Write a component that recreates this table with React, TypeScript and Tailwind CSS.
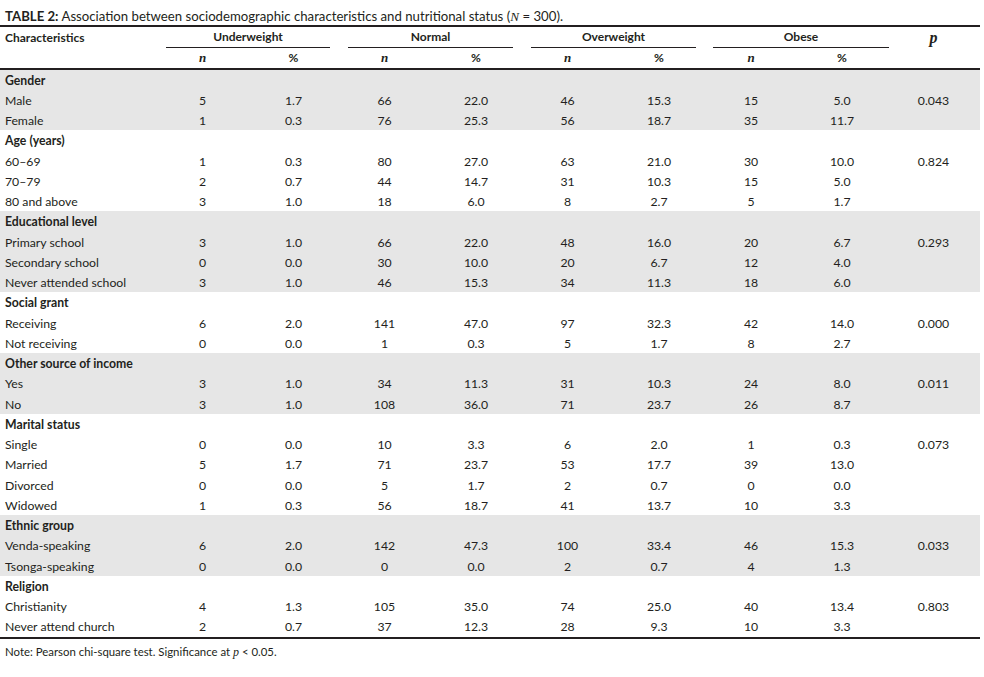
import React from 'react';

// Table 2 - sociodemographic characteristics vs nutritional status
type Row = { label: string; v: string[]; p?: string };
type Group = { title: string; rows: Row[] };

const groups: Group[] = [
  {
    title: 'Gender',
    rows: [
      { label: 'Male', v: ['5', '1.7', '66', '22.0', '46', '15.3', '15', '5.0'], p: '0.043' },
      { label: 'Female', v: ['1', '0.3', '76', '25.3', '56', '18.7', '35', '11.7'] },
    ],
  },
  {
    title: 'Age (years)',
    rows: [
      { label: '60–69', v: ['1', '0.3', '80', '27.0', '63', '21.0', '30', '10.0'], p: '0.824' },
      { label: '70–79', v: ['2', '0.7', '44', '14.7', '31', '10.3', '15', '5.0'] },
      { label: '80 and above', v: ['3', '1.0', '18', '6.0', '8', '2.7', '5', '1.7'] },
    ],
  },
  {
    title: 'Educational level',
    rows: [
      { label: 'Primary school', v: ['3', '1.0', '66', '22.0', '48', '16.0', '20', '6.7'], p: '0.293' },
      { label: 'Secondary school', v: ['0', '0.0', '30', '10.0', '20', '6.7', '12', '4.0'] },
      { label: 'Never attended school', v: ['3', '1.0', '46', '15.3', '34', '11.3', '18', '6.0'] },
    ],
  },
  {
    title: 'Social grant',
    rows: [
      { label: 'Receiving', v: ['6', '2.0', '141', '47.0', '97', '32.3', '42', '14.0'], p: '0.000' },
      { label: 'Not receiving', v: ['0', '0.0', '1', '0.3', '5', '1.7', '8', '2.7'] },
    ],
  },
  {
    title: 'Other source of income',
    rows: [
      { label: 'Yes', v: ['3', '1.0', '34', '11.3', '31', '10.3', '24', '8.0'], p: '0.011' },
      { label: 'No', v: ['3', '1.0', '108', '36.0', '71', '23.7', '26', '8.7'] },
    ],
  },
  {
    title: 'Marital status',
    rows: [
      { label: 'Single', v: ['0', '0.0', '10', '3.3', '6', '2.0', '1', '0.3'], p: '0.073' },
      { label: 'Married', v: ['5', '1.7', '71', '23.7', '53', '17.7', '39', '13.0'] },
      { label: 'Divorced', v: ['0', '0.0', '5', '1.7', '2', '0.7', '0', '0.0'] },
      { label: 'Widowed', v: ['1', '0.3', '56', '18.7', '41', '13.7', '10', '3.3'] },
    ],
  },
  {
    title: 'Ethnic group',
    rows: [
      { label: 'Venda-speaking', v: ['6', '2.0', '142', '47.3', '100', '33.4', '46', '15.3'], p: '0.033' },
      { label: 'Tsonga-speaking', v: ['0', '0.0', '0', '0.0', '2', '0.7', '4', '1.3'] },
    ],
  },
  {
    title: 'Religion',
    rows: [
      { label: 'Christianity', v: ['4', '1.3', '105', '35.0', '74', '25.0', '40', '13.4'], p: '0.803' },
      { label: 'Never attend church', v: ['2', '0.7', '37', '12.3', '28', '9.3', '10', '3.3'] },
    ],
  },
];

const cols = 'grid grid-cols-[157px_91px_91px_91px_92px_91px_92px_92px_90px_93px]';
const serif = "font-['Liberation_Serif',serif]";

function N() {
  return <span className={`${serif} italic font-bold text-[13px]`}>n</span>;
}

export default function App() {
  return (
    <div className="w-[984px] h-[677px] bg-white text-[#231f20] font-['Lato',sans-serif]">
      <div className="w-[980px]">
        {/* Title */}
        <div className="h-[25px] pt-[8px] pl-[5px] text-[13.2px] leading-[16px] whitespace-nowrap">
          <span className="font-bold">TABLE 2:</span> Association between sociodemographic characteristics and
          nutritional status (<span className={`${serif} italic`}>N</span> = 300).
        </div>

        {/* Header */}
        <div className="border-t-2 border-[#231f20]">
          <div className={`${cols} grid-rows-[21px] h-[21px] text-[12px] leading-[16px] font-bold`}>
            <div className="pl-[5px] flex items-center">Characteristics</div>
            <div className="col-span-2 mx-[9px] flex items-center justify-center border-b border-[#231f20]">Underweight</div>
            <div className="col-span-2 mx-[9px] flex items-center justify-center border-b border-[#231f20]">Normal</div>
            <div className="col-span-2 mx-[9px] flex items-center justify-center border-b border-[#231f20]">Overweight</div>
            <div className="col-span-2 ml-[8px] mr-[-2px] flex items-center justify-center border-b border-[#231f20]">Obese</div>
            <div className={`flex items-center justify-center ${serif} italic text-[16px] leading-[16px]`}>p</div>
          </div>
          <div className={`${cols} grid-rows-[19.5px] h-[21.5px] text-[12px] leading-[16px] font-bold border-b-2 border-[#231f20]`}>
            <div />
            {[0, 1, 2, 3].map((i) => (
              <React.Fragment key={i}>
                <div className="flex items-center justify-center"><N /></div>
                <div className="flex items-center justify-center">%</div>
              </React.Fragment>
            ))}
            <div />
          </div>
        </div>

        {/* Body */}
        <div className="border-b-2 border-[#231f20] text-[12.25px] leading-[16px]">
          {groups.map((g, gi) => (
            <div key={g.title} className={gi % 2 === 0 ? 'bg-[#e6e6e6]' : 'bg-white'}>
              <div className="h-[20.25px] pt-[2px] flex items-center pl-[5px] font-bold">{g.title}</div>
              {g.rows.map((r) => (
                <div key={r.label} className={`${cols} h-[20.25px] pt-[2px]`}>
                  <div className="pl-[5px] flex items-center whitespace-nowrap">{r.label}</div>
                  {r.v.map((x, i) => (
                    <div key={i} className="flex items-center justify-center">{x}</div>
                  ))}
                  <div className="flex items-center justify-center">{r.p}</div>
                </div>
              ))}
            </div>
          ))}
        </div>

        {/* Footnote */}
        <div className="pl-[5px] pt-[6px] text-[11.4px] leading-[14px]">
          Note: Pearson chi-square test. Significance at <span className={`${serif} italic text-[12px]`}>p</span> &lt; 0.05.
        </div>
      </div>
    </div>
  );
}
